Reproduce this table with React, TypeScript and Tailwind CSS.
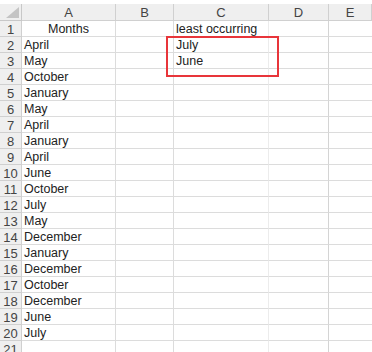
const colA = [
  "Months",
  "April",
  "May",
  "October",
  "January",
  "May",
  "April",
  "January",
  "April",
  "June",
  "October",
  "July",
  "May",
  "December",
  "January",
  "December",
  "October",
  "December",
  "June",
  "July",
  "",
];

const colC: Record<number, string> = {
  0: "least occurring",
  1: "July",
  2: "June",
};

const headers = ["A", "B", "C", "D", "E"];

const App = () => {
  return (
    <div className="relative w-[372px] h-[352px] overflow-hidden bg-white pt-[4px] font-['Liberation_Sans',Arial,sans-serif] text-[12px] text-[#222]">
      <div className="grid grid-cols-[22px_94px_58px_95px_60px_1fr]">
        {/* corner */}
        <div className="relative h-[17px] bg-[#efefef] border-r border-b border-[#c8c8c8]">
          <div className="absolute right-[2px] bottom-[2px] w-0 h-0 border-l-[13px] border-l-transparent border-b-[11px] border-b-[#c4c4c4]" />
        </div>
        {headers.map((h) => (
          <div
            key={h}
            className="h-[17px] bg-[#efefef] border-r border-b border-[#d0d0d0] flex items-end justify-center pb-[1px] text-[#444] leading-none text-[13px]"
          >
            {h}
          </div>
        ))}

        {colA.map((a, i) => (
          <div key={i} className="contents">
            <div className="h-[16px] bg-[#efefef] border-r border-b border-[#d0d0d0] flex items-end justify-center text-[#444] text-[13px] leading-[13px]">
              {i + 1}
            </div>
            <div
              className={`h-[16px] border-r border-b border-[#dcdcdc] flex items-end leading-[13px] text-[12.5px] ${
                i === 0 ? "justify-center" : "pl-[2px]"
              }`}
            >
              {a}
            </div>
            <div className="h-[16px] border-r border-b border-[#dcdcdc]" />
            <div className="h-[16px] border-r border-b border-r-[#ececec] border-b-[#dcdcdc] flex items-end pl-[2px] leading-[13px] text-[12.5px]">
              {colC[i] ?? ""}
            </div>
            <div className="h-[16px] border-r border-b border-r-[#d4d4d4] border-b-[#dcdcdc]" />
            <div className="h-[16px] border-b border-[#dcdcdc]" />
          </div>
        ))}
      </div>

      {/* highlight box */}
      <div className="absolute left-[166px] top-[36px] w-[113px] h-[41px] border-2 border-[#e8353a]" />
    </div>
  );
};

export default App;
